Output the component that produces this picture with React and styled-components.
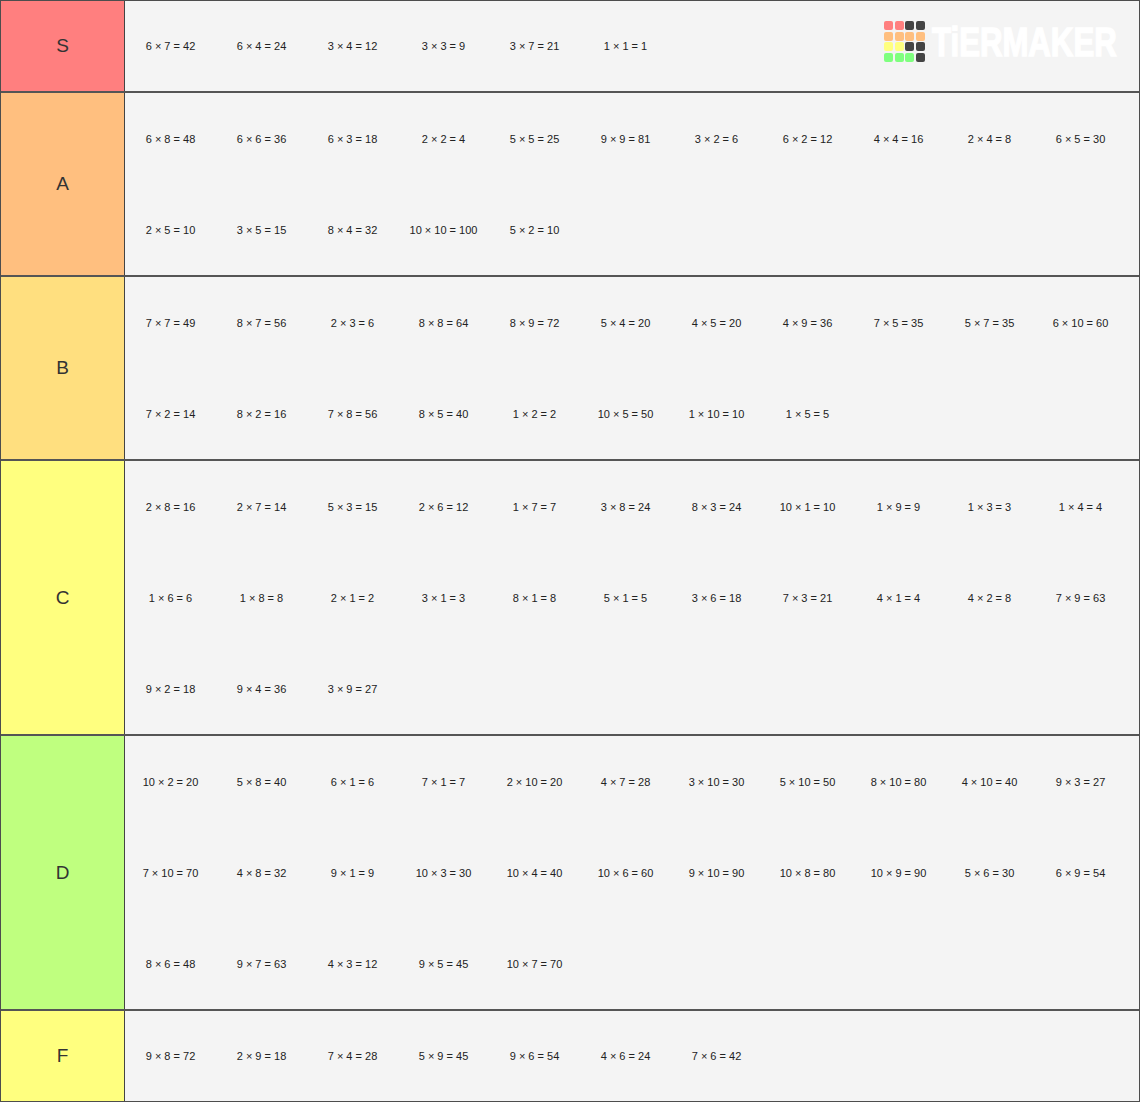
import React from 'react';
import styled, { createGlobalStyle } from 'styled-components';

const GlobalStyle = createGlobalStyle`
  html, body {
    margin: 0;
    padding: 0;
    background: #f4f4f4;
  }
  body {
    font-family: 'Liberation Sans', Arial, sans-serif;
  }
`;

const TIERS = [
  {
    label: 'S',
    color: '#ff7f7f',
    items: ['6 × 7 = 42', '6 × 4 = 24', '3 × 4 = 12', '3 × 3 = 9', '3 × 7 = 21', '1 × 1 = 1'],
  },
  {
    label: 'A',
    color: '#ffbf7f',
    items: [
      '6 × 8 = 48', '6 × 6 = 36', '6 × 3 = 18', '2 × 2 = 4', '5 × 5 = 25', '9 × 9 = 81',
      '3 × 2 = 6', '6 × 2 = 12', '4 × 4 = 16', '2 × 4 = 8', '6 × 5 = 30', '2 × 5 = 10',
      '3 × 5 = 15', '8 × 4 = 32', '10 × 10 = 100', '5 × 2 = 10',
    ],
  },
  {
    label: 'B',
    color: '#ffdf7f',
    items: [
      '7 × 7 = 49', '8 × 7 = 56', '2 × 3 = 6', '8 × 8 = 64', '8 × 9 = 72', '5 × 4 = 20',
      '4 × 5 = 20', '4 × 9 = 36', '7 × 5 = 35', '5 × 7 = 35', '6 × 10 = 60', '7 × 2 = 14',
      '8 × 2 = 16', '7 × 8 = 56', '8 × 5 = 40', '1 × 2 = 2', '10 × 5 = 50', '1 × 10 = 10',
      '1 × 5 = 5',
    ],
  },
  {
    label: 'C',
    color: '#ffff7f',
    items: [
      '2 × 8 = 16', '2 × 7 = 14', '5 × 3 = 15', '2 × 6 = 12', '1 × 7 = 7', '3 × 8 = 24',
      '8 × 3 = 24', '10 × 1 = 10', '1 × 9 = 9', '1 × 3 = 3', '1 × 4 = 4', '1 × 6 = 6',
      '1 × 8 = 8', '2 × 1 = 2', '3 × 1 = 3', '8 × 1 = 8', '5 × 1 = 5', '3 × 6 = 18',
      '7 × 3 = 21', '4 × 1 = 4', '4 × 2 = 8', '7 × 9 = 63', '9 × 2 = 18', '9 × 4 = 36',
      '3 × 9 = 27',
    ],
  },
  {
    label: 'D',
    color: '#bfff7f',
    items: [
      '10 × 2 = 20', '5 × 8 = 40', '6 × 1 = 6', '7 × 1 = 7', '2 × 10 = 20', '4 × 7 = 28',
      '3 × 10 = 30', '5 × 10 = 50', '8 × 10 = 80', '4 × 10 = 40', '9 × 3 = 27', '7 × 10 = 70',
      '4 × 8 = 32', '9 × 1 = 9', '10 × 3 = 30', '10 × 4 = 40', '10 × 6 = 60', '9 × 10 = 90',
      '10 × 8 = 80', '10 × 9 = 90', '5 × 6 = 30', '6 × 9 = 54', '8 × 6 = 48', '9 × 7 = 63',
      '4 × 3 = 12', '9 × 5 = 45', '10 × 7 = 70',
    ],
  },
  {
    label: 'F',
    color: '#ffff7f',
    items: ['9 × 8 = 72', '2 × 9 = 18', '7 × 4 = 28', '5 × 9 = 45', '9 × 6 = 54', '4 × 6 = 24', '7 × 6 = 42'],
  },
];

// logo squares, row by row
const LOGO = [
  '#ff7f7f', '#ff7f7f', '#444', '#444',
  '#ffbf7f', '#ffbf7f', '#ffbf7f', '#ffbf7f',
  '#ffff7f', '#ffff7f', '#444', '#444',
  '#7fff7f', '#7fff7f', '#7fff7f', '#444',
];

const Board = styled.div`
  position: relative;
  display: flex;
  flex-direction: column;
  width: 1140px;
  box-sizing: border-box;
  border: 1px solid #4d4d4d;
  background: #f4f4f4;
`;

const Row = styled.div`
  display: flex;
  & + & {
    border-top: 2px solid #555;
  }
`;

const Label = styled.div`
  width: 123px;
  flex-shrink: 0;
  display: flex;
  align-items: center;
  justify-content: center;
  background: ${props => props.color};
  border-right: 1px solid #444;
  color: #333;
  font-size: 19px;
`;

const Items = styled.div`
  flex: 1;
  display: flex;
  flex-wrap: wrap;
  align-content: flex-start;
  background: #f4f4f4;
`;

const Item = styled.div`
  width: 91px;
  height: ${props => (props.$short ? 90 : 91)}px;
  display: flex;
  align-items: center;
  justify-content: center;
  color: #222;
  font-size: 11px;
  white-space: nowrap;
`;

const Logo = styled.div`
  position: absolute;
  top: 19px;
  left: 883px;
  display: flex;
  align-items: center;
  gap: 7px;
  pointer-events: none;
`;

const LogoGrid = styled.div`
  display: grid;
  grid-template-columns: repeat(4, 9px);
  grid-auto-rows: 9px;
  gap: 1.7px;
`;

const LogoCell = styled.span`
  border-radius: 2px;
  background: ${props => props.color};
`;

const LogoText = styled.span`
  display: inline-block;
  margin-top: 2px;
  width: 188px;
  color: #fff;
  font-family: 'Liberation Sans', Arial, sans-serif;
  font-weight: 700;
  font-size: 41px;
  line-height: 41px;
  white-space: nowrap;
  -webkit-text-stroke: 1.5px #fff;
  transform: scaleX(0.76);
  transform-origin: left center;
`;

const App = () => {
  return (
    <>
      <GlobalStyle />
      <Board>
        {TIERS.map((tier, t) => {
          // single-line edge rows are a pixel shorter in the original
          const short = t === 0 || t === TIERS.length - 1;
          return (
            <Row key={tier.label}>
              <Label color={tier.color}>{tier.label}</Label>
              <Items>
                {tier.items.map((item, i) => (
                  <Item key={i} $short={short}>{item}</Item>
                ))}
              </Items>
            </Row>
          );
        })}
        <Logo>
          <LogoGrid>
            {LOGO.map((c, i) => (
              <LogoCell key={i} color={c} />
            ))}
          </LogoGrid>
          <LogoText>TiERMAKER</LogoText>
        </Logo>
      </Board>
    </>
  );
};

export default App;
